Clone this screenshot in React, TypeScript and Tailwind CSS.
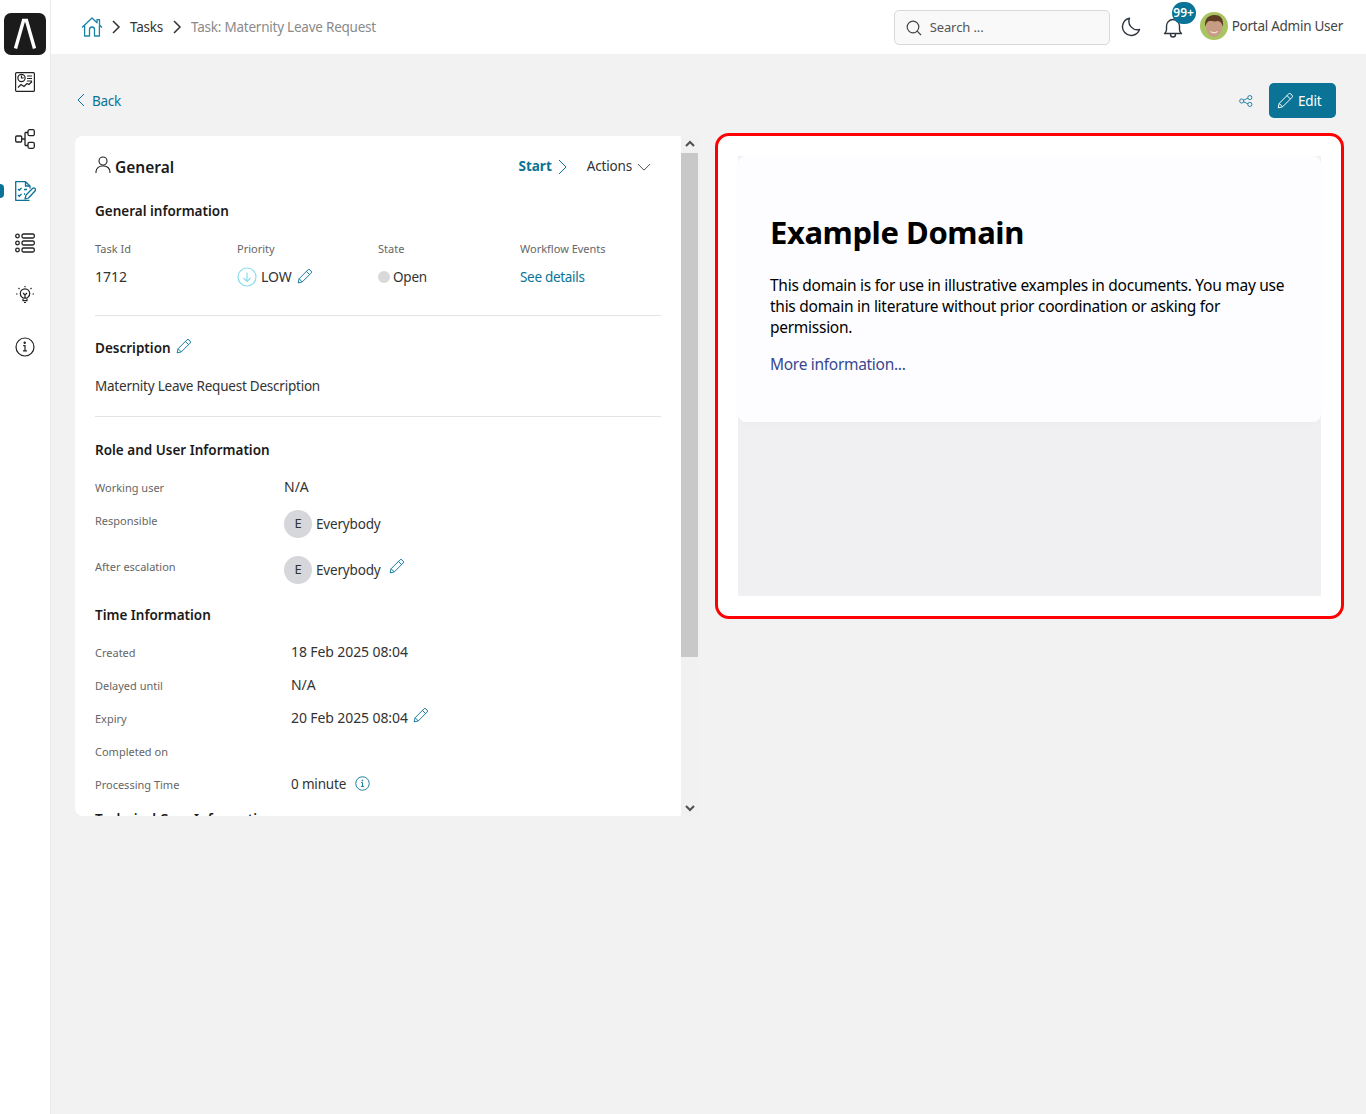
const font = { fontFamily: '"Noto Sans", "Open Sans", sans-serif' };

function Pencil({ className = "" }: { className?: string }) {
  return (
    <svg viewBox="0 0 16 16" fill="none" stroke="currentColor" strokeWidth="1" className={className}>
      <path d="M1.2 14.8l1-4.4L11.6 1a1.6 1.6 0 0 1 2.3 0l1.1 1.1a1.6 1.6 0 0 1 0 2.3L5.600 13.800z" strokeLinejoin="round" />
      <path d="M10 2.600l3.400 3.400M2.200 10.400l3.400 3.400" />
    </svg>
  );
}

function InfoCircle({ className = "" }: { className?: string }) {
  return (
    <svg viewBox="0 0 20 20" fill="none" stroke="currentColor" strokeWidth="1.200" className={className}>
      <circle cx="10" cy="10" r="9" />
      <path d="M8.600 8.600h1.400v5.200M8.400 13.800h3.200" strokeLinecap="round" />
      <circle cx="9.700" cy="5.800" r=".6" fill="currentColor" />
    </svg>
  );
}

function Sidebar() {
  return (
    <aside className="w-[51px] shrink-0 bg-white border-r border-[#ececec] flex flex-col items-center relative">
      <div className="w-[42px] h-[42px] mt-[13px] ml-[-1px] rounded-[7px] bg-[#1b1b1b] flex items-center justify-center">
        <svg viewBox="0 0 42 42" className="w-[42px] h-[42px]" fill="none" stroke="#fff" strokeWidth="3.400">
          <path d="M11.500 35.500L19.500 7.500h3L30.500 35.500" />
        </svg>
      </div>
      <svg viewBox="0 0 20 20" className="w-[20px] h-[20px] mt-[17px] mb-[37px] text-[#222]" fill="none" stroke="currentColor" strokeWidth="1.200">
        <rect x=".6" y=".6" width="18.800" height="18.800" rx="1" />
        <circle cx="6.500" cy="6" r="3.600" />
        <path d="M6.500 3.600V6h2.200M12 4h5M12 6.500h5M12 9h5M3 15.500l3-3 3 2 3-3 2 1 3-3" />
      </svg>
      <svg viewBox="0 0 20 20" className="w-[20px] h-[20px] mb-[32px] text-[#222]" fill="none" stroke="currentColor" strokeWidth="1.300">
        <rect x=".7" y="7" width="6" height="6" rx="1" />
        <rect x="13" y=".7" width="6.300" height="6" rx="1.500" />
        <rect x="13" y="13.300" width="6.300" height="6" rx="1.500" />
        <path d="M6.500 10H10M10 3.500h3M10 16.500h3M10 3.500v13" />
      </svg>
      <svg viewBox="0 0 21 20" className="w-[21px] h-[20px] mb-[32px] ml-[1px] text-[#0a7396]" fill="none" stroke="currentColor" strokeWidth="1.300">
        <path d="M15 7.500V5L10.500.7H.7v18.600h13.800" strokeLinejoin="round" />
        <path d="M10.500.7V5H15M3 8l1.300 1.300L6.500 7M3 14l1.300 1.300 2.200-2.300M9 8.500h3M9 13h1" />
        <path d="M10 18l1-4 6.500-6.500a1.400 1.400 0 0 1 2.500 2.500L13.500 17z" strokeLinejoin="round" />
      </svg>
      <svg viewBox="0 0 20 20" className="w-[20px] h-[20px] mb-[32px] text-[#222]" fill="none" stroke="currentColor" strokeWidth="1.300">
        <circle cx="2.500" cy="3" r="1.800" />
        <circle cx="2.500" cy="10" r="1.800" />
        <circle cx="2.500" cy="17" r="1.800" />
        <rect x="7" y="1" width="12.300" height="4" rx="1.500" />
        <rect x="7" y="8" width="12.300" height="4" rx="1.500" />
        <rect x="7" y="15" width="12.300" height="4" rx="1.500" />
      </svg>
      <svg viewBox="0 0 20 20" className="w-[20px] h-[20px] mb-[32px] text-[#222]" fill="none" stroke="currentColor" strokeWidth="1.200">
        <circle cx="10" cy="8.500" r="4.700" />
        <path d="M8 8l2 2 2-2M10 10v3.200M8 13.500v2.200h4v-2.200M9 17.500h2M10 1v1.300M3.500 3l1 1M16.500 3l-1 1M1 9h1.500M17.500 9H19" />
      </svg>
      <InfoCircle className="w-[20px] h-[20px] text-[#222]" />
      <div className="absolute left-0 top-[184px] w-[4px] h-[14px] rounded-r-[4px] bg-[#0a7396]" />
    </aside>
  );
}

function Header() {
  return (
    <header className="h-[54px] bg-white flex items-center pl-[30px] pr-[23px]">
      <svg viewBox="0 0 22 20" className="w-[22px] h-[20px] text-[#1a84a8]" fill="none" stroke="currentColor" strokeWidth="1.300">
        <path d="M1 10.500L11 1l5 4.700V2.600h2.500V8l2.500 2.500M3.600 8.500V19h4.900v-6.500a2.500 2.500 0 0 1 5 0V19h4.900V8.500" strokeLinejoin="round" />
      </svg>
      <svg viewBox="0 0 10 14" className="w-[10px] h-[14px] ml-[8px] text-[#333]" fill="none" stroke="currentColor" strokeWidth="1.500"><path d="M2 1l6 6-6 6" /></svg>
      <span className="ml-[9px] mt-[1px] text-[13.500px] tracking-[-0.23px] text-[#333]">Tasks</span>
      <svg viewBox="0 0 10 14" className="w-[10px] h-[14px] ml-[9px] text-[#333]" fill="none" stroke="currentColor" strokeWidth="1.500"><path d="M2 1l6 6-6 6" /></svg>
      <span className="ml-[9px] mt-[1px] text-[13.500px] tracking-[-0.23px] text-[#8a8a8a]">Task: Maternity Leave Request</span>
      <div className="ml-auto w-[216px] h-[35px] mt-[1px] rounded-[5px] border border-[#d9d9d9] bg-[#f9f9f9] flex items-center pl-[11px]">
        <svg viewBox="0 0 16 16" className="w-[16px] h-[16px] text-[#444]" fill="none" stroke="currentColor" strokeWidth="1.200">
          <circle cx="7" cy="7" r="5.800" />
          <path d="M11.200 11.200L15 15" />
        </svg>
        <span className="ml-[8px] mt-[1px] text-[13px] tracking-[-0.1px] text-[#555]">Search ...</span>
      </div>
      <svg viewBox="0 0 20 20" className="w-[20px] h-[20px] ml-[11px] text-[#2f3640]" fill="none" stroke="currentColor" strokeWidth="1.400">
        <path d="M8.500 1.200a8.700 8.700 0 1 0 10 11.300A8.500 8.500 0 0 1 8.500 1.200z" strokeLinejoin="round" />
      </svg>
      <div className="relative w-[20px] h-[20px] ml-[22px] mt-[1px]">
        <svg viewBox="0 0 20 20" className="w-[20px] h-[20px] text-[#2f3640]" fill="none" stroke="currentColor" strokeWidth="1.400">
          <path d="M1.500 15.500c1.500-1 2-2 2-4V8a6.500 6.500 0 0 1 13 0v3.500c0 2 .5 3 2 4zM7.500 15.500v1a2.500 2.500 0 0 0 5 0v-1" strokeLinejoin="round" />
        </svg>
        <span className="absolute left-[9px] top-[-16px] w-[24px] h-[22px] rounded-full bg-[#0a7396] text-white text-[12px] font-semibold flex items-center justify-center leading-none">99+</span>
      </div>
      <svg viewBox="0 0 28 28" className="w-[28px] h-[28px] ml-[17px] mt-[-2px]">
        <circle cx="14" cy="14" r="14" fill="#a9c463" />
        <ellipse cx="14" cy="15" rx="8" ry="10" fill="#c89c84" />
        <path d="M5 15C4 5 10 3 15 3s9 3 8 12c-1-4-3-6-5-6-3 1-7 0-9 0-2 1-3 3-4 6z" fill="#5c3d22" />
        <path d="M10.500 19.500c2 1.500 5 1.500 7 0" stroke="#f1e4d8" strokeWidth="1.200" fill="none" />
      </svg>
      <span className="ml-[4px] mt-[-2px] text-[13.500px] tracking-[-0.26px] text-[#444]">Portal Admin User</span>
    </header>
  );
}

function Label({ children }: { children: React.ReactNode }) {
  return <div className="text-[11px] leading-[15px] text-[#666]">{children}</div>;
}

function SectionTitle({ children }: { children: React.ReactNode }) {
  return <h3 className="text-[13.500px] leading-[18px] font-semibold text-[#1a1a1a]">{children}</h3>;
}

function EBadge() {
  return <span className="w-[28px] h-[28px] rounded-full bg-[#d6d7db] flex items-center justify-center text-[13px] text-[#333]">E</span>;
}

function TimeRow({ label, children }: { label: string; children?: React.ReactNode }) {
  return (
    <div className="h-[33px] flex items-center">
      <div className="w-[196px] pt-[2px]"><Label>{label}</Label></div>
      <div className="flex items-center text-[14px] tracking-[-0.1px] text-[#333]">{children}</div>
    </div>
  );
}

function TaskCard() {
  return (
    <div className="w-[623px] h-[680px] flex shrink-0">
      <div className="w-[606px] bg-white rounded-l-[8px] overflow-hidden pl-[20px] pr-[20px]">
        <div className="flex items-center mt-[20px] h-[22px]">
          <svg viewBox="0 0 16 18" className="w-[16px] h-[18px] text-[#222] mt-[-5px]" fill="none" stroke="currentColor" strokeWidth="1.100">
            <circle cx="8" cy="5" r="4" />
            <path d="M1 17v-1.500A6 6 0 0 1 7 10h2a6 6 0 0 1 6 6v1" />
          </svg>
          <span className="ml-[4px] mt-[2px] text-[15.500px] font-semibold text-[#1a1a1a]">General</span>
          <span className="ml-auto mt-[-2px] text-[13.500px] font-bold text-[#0a7396]">Start</span>
          <svg viewBox="0 0 10 16" className="w-[10px] h-[16px] ml-[5px] text-[#0a7396]" fill="none" stroke="currentColor" strokeWidth="1"><path d="M2 1l7 7-7 7" /></svg>
          <span className="ml-[20px] mt-[-2px] text-[13.500px] tracking-[-0.17px] text-[#333]">Actions</span>
          <svg viewBox="0 0 16 10" className="w-[14px] h-[9px] ml-[5px] mr-[10px] text-[#333]" fill="none" stroke="currentColor" strokeWidth="1"><path d="M1 1l7 7 7-7" /></svg>
        </div>
        <div className="mt-[24px]"><SectionTitle>General information</SectionTitle></div>
        <div className="grid grid-cols-[142px_141px_142px_1fr] mt-[21px]">
          <Label>Task Id</Label>
          <Label>Priority</Label>
          <Label>State</Label>
          <Label>Workflow Events</Label>
        </div>
        <div className="grid grid-cols-[142px_141px_142px_1fr] mt-[10px] h-[20px] items-center text-[13.500px] tracking-[-0.23px] text-[#333]">
          <span className="text-[14px] tracking-normal">1712</span>
          <div className="flex items-center">
            <svg viewBox="0 0 20 20" className="w-[20px] h-[20px] text-[#8adcea]" fill="none" stroke="currentColor" strokeWidth="1.200">
              <circle cx="10" cy="10" r="9" />
              <path d="M10 5.500v9M6.500 11l3.500 3.500 3.500-3.500" />
            </svg>
            <span className="ml-[4px] text-[14px] tracking-normal">LOW</span>
            <Pencil className="w-[15px] h-[15px] ml-[5px] text-[#0a7396]" />
          </div>
          <div className="flex items-center">
            <span className="w-[12px] h-[12px] rounded-full bg-[#d9d9d9]" />
            <span className="ml-[3px] mt-[1px]">Open</span>
          </div>
          <span className="mt-[1px] text-[#0a7396] tracking-[-0.3px]">See details</span>
        </div>
        <div className="border-t border-[#e3e3e3] mt-[29px] w-[566px]" />
        <div className="flex items-center mt-[23px]">
          <SectionTitle>Description</SectionTitle>
          <Pencil className="w-[15px] h-[15px] ml-[5px] mt-[-3px] text-[#0a7396]" />
        </div>
        <p className="mt-[19px] text-[13.500px] tracking-[-0.23px] leading-[20px] text-[#333]">Maternity Leave Request Description</p>
        <div className="border-t border-[#e3e3e3] mt-[20px] w-[566px]" />
        <div className="mt-[24px]"><SectionTitle>Role and User Information</SectionTitle></div>
        <div className="flex items-center h-[24px] mt-[16px]">
          <div className="w-[189px]"><Label>Working user</Label></div>
          <span className="mt-[-1px] text-[14px] text-[#333]">N/A</span>
        </div>
        <div className="flex h-[28px] mt-[11px]">
          <div className="w-[189px] pt-[3px]"><Label>Responsible</Label></div>
          <EBadge />
          <span className="ml-[4px] text-[13.500px] tracking-[-0.17px] leading-[28px] text-[#333]">Everybody</span>
        </div>
        <div className="flex h-[28px] mt-[18px]">
          <div className="w-[189px] pt-[3px]"><Label>After escalation</Label></div>
          <EBadge />
          <span className="ml-[4px] text-[13.500px] tracking-[-0.17px] leading-[28px] text-[#333]">Everybody</span>
          <Pencil className="w-[15px] h-[15px] ml-[8px] mt-[3px] text-[#0a7396]" />
        </div>
        <div className="mt-[22px] mb-[11px]"><SectionTitle>Time Information</SectionTitle></div>
        <TimeRow label="Created">18 Feb 2025 08:04</TimeRow>
        <TimeRow label="Delayed until">N/A</TimeRow>
        <TimeRow label="Expiry">
          20 Feb 2025 08:04
          <Pencil className="w-[15px] h-[15px] ml-[5px] mt-[-5px] text-[#0a7396]" />
        </TimeRow>
        <TimeRow label="Completed on" />
        <TimeRow label="Processing Time">
          <span className="mt-[1px] text-[13.500px] tracking-[-0.17px]">0 minute</span>
          <InfoCircle className="w-[15px] h-[15px] ml-[9px] text-[#0a7396]" />
        </TimeRow>
        <div className="mt-[10px]"><SectionTitle>Technical Case Information</SectionTitle></div>
      </div>
      <div className="w-[17px] bg-[#f1f1f1] flex flex-col">
        <div className="h-[17px] pb-[2px] flex items-center justify-center">
          <svg viewBox="0 0 10 7" className="w-[10px] h-[7px] text-[#505050]" fill="none" stroke="currentColor" strokeWidth="2"><path d="M1 6l4-4 4 4" /></svg>
        </div>
        <div className="h-[504px] bg-[#c8c8c8]" />
        <div className="h-[142px]" />
        <div className="h-[17px] pt-[2px] flex items-center justify-center">
          <svg viewBox="0 0 10 7" className="w-[10px] h-[7px] text-[#505050]" fill="none" stroke="currentColor" strokeWidth="2"><path d="M1 1l4 4 4-4" /></svg>
        </div>
      </div>
    </div>
  );
}

function PreviewFrame() {
  return (
    <div className="w-[629px] h-[486px] shrink-0 mt-[-3px] ml-[17px] rounded-[14px] border-[3px] border-[#ff0000] bg-white p-[20px]">
      <div className="h-[440px] bg-[#f0f0f2]">
        <div className="h-[266px] bg-[#fdfdff] rounded-[8px] pt-[55px] px-[32px] shadow-[0_2px_6px_rgba(0,0,0,0.02)]">
          <h1 className="text-[31px] tracking-[-0.42px] leading-[42px] font-bold text-black">Example Domain</h1>
          <p className="mt-[22px] text-[15.500px] tracking-[-0.27px] leading-[21px] text-black">
            This domain is for use in illustrative examples in documents. You may use this domain in literature without prior coordination or asking for permission.
          </p>
          <p className="mt-[16px] text-[15.500px] tracking-[-0.3px] leading-[21px] text-[#38488f]">More information...</p>
        </div>
      </div>
    </div>
  );
}

export default function App() {
  return (
    <div className="flex min-h-[1114px] bg-[#f2f2f2]" style={font}>
      <Sidebar />
      <div className="flex-1 min-w-0">
        <Header />
        <main className="pl-[24px] pr-[22px]">
          <div className="flex items-center h-[35px] mt-[29px] mr-[8px]">
            <svg viewBox="0 0 8 14" className="w-[8px] h-[14px] ml-[2px] mt-[-2px] text-[#0a7396]" fill="none" stroke="currentColor" strokeWidth="1"><path d="M7 1L1 7l6 6" /></svg>
            <span className="ml-[7px] mt-[2px] text-[13.500px] tracking-[-0.3px] text-[#0a7396]">Back</span>
            <svg viewBox="0 0 16 14" className="w-[14px] h-[12px] ml-auto text-[#0a7396]" fill="none" stroke="currentColor" strokeWidth="1">
              <circle cx="3" cy="7" r="2.400" />
              <circle cx="12.500" cy="3" r="2.400" />
              <circle cx="12.500" cy="11" r="2.400" />
              <path d="M5.200 6l5-2.200M5.200 8l5 2.200" />
            </svg>
            <button className="ml-[16px] w-[67px] h-[35px] rounded-[5px] bg-[#0a7396] text-white text-[13.500px] tracking-[-0.17px] flex items-center justify-start pl-[8px]">
              <Pencil className="w-[16px] h-[16px] mr-[5px]" />
              <span className="mt-[1px]">Edit</span>
            </button>
          </div>
          <div className="flex mt-[18px] items-start">
            <TaskCard />
            <PreviewFrame />
          </div>
        </main>
      </div>
    </div>
  );
}
